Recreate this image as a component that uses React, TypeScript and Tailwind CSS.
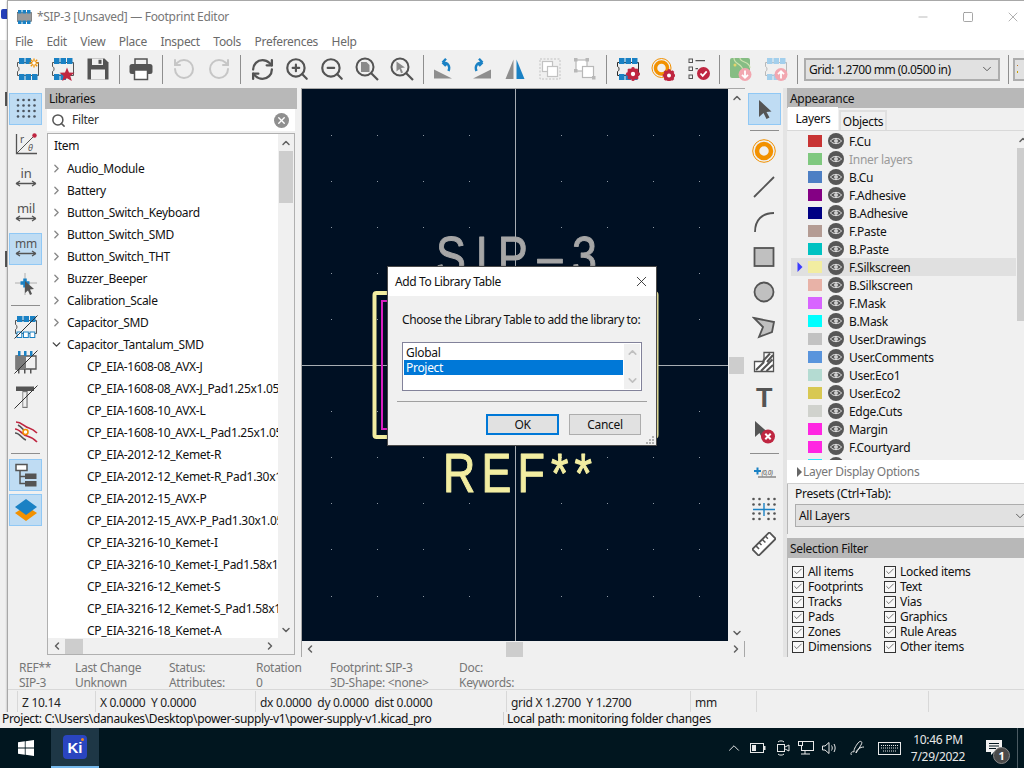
import React from "react";
import { ChevronUp, ChevronDown, ChevronLeft, ChevronRight, RotateCcw, RotateCw, RefreshCw, ZoomIn, ZoomOut, Check, X, Search, Minus, Square } from "lucide-react";

const D = "#545454", B = "#1a81c4", R = "#bf2641", O = "#f29100";

const I = ({ children, s = 24 }: { children?: React.ReactNode; s?: number }) => (
  <svg width={s} height={s} viewBox="0 0 24 24" fill="none">{children}</svg>
);

const FpBody = ({ c = D, p = B, top = 3, bot = 3 }: { c?: string; p?: string; top?: number; bot?: number }) => (
  <>
    <path d="M1.5 5.5H22.5V18.500H1.5V14.500C3.500 14 3.500 10 1.500 9.500Z" stroke={c} strokeWidth="1" />
    {[0, 1, 2].slice(0, top).map((i) => <rect key={i} x={3 + i * 6.5} y="1" width="5.500" height="6" fill={p} />)}
    {[0, 1, 2].slice(0, bot).map((i) => <rect key={i} x={3 + i * 6.5} y="17" width="5.500" height="6" fill={p} />)}
  </>
);

const Gear = ({ x, y, r = 5, c = R }: { x: number; y: number; r?: number; c?: string }) => (
  <g>
    <circle cx={x} cy={y} r={r * 0.72} stroke={c} strokeWidth={r * 0.56} />
    {[0, 45, 90, 135].map((a) => (
      <rect key={a} x={x - r * 0.22} y={y - r * 1.15} width={r * 0.44} height={r * 2.3} fill={c} transform={`rotate(${a} ${x} ${y})`} />
    ))}
    <circle cx={x} cy={y} r={r * 0.36} fill="#fff" />
  </g>
);

const Sep = () => (
  <div className="w-[8px] h-full flex items-center justify-center shrink-0">
    <div className="w-[1px] h-[29px] bg-[#8e8e8e]" />
  </div>
);
const HSep = () => (
  <div className="h-[8px] w-full flex items-center justify-center shrink-0">
    <div className="h-[1px] w-[29px] bg-[#8e8e8e]" />
  </div>
);
const TB = ({ children }: { children?: React.ReactNode }) => (
  <div className="w-[35px] h-[38px] flex items-center justify-center shrink-0">{children}</div>
);
const VB = ({ children, on }: { children?: React.ReactNode; on?: boolean }) => (
  <div className="w-full h-[35px] flex items-center justify-center shrink-0">
    <div className={on ? "w-[33px] h-[32px] flex items-center justify-center bg-[#bfdcf3] border border-[#90c8f5]" : "w-[33px] h-[32px] flex items-center justify-center"}>
      {children}
    </div>
  </div>
);

const Dots = ({ c = "#4c5560" }: { c?: string }) => (
  <I>
    {[4, 9.500, 15, 20.500].flatMap((x) => [3, 8.500, 14, 19.500].map((y) => <circle key={x + "-" + y} cx={x} cy={y} r="1.300" fill={c} />))}
  </I>
);
const Unit = ({ t, y = 11, fs = 13 }: { t: string; y?: number; fs?: number }) => (
  <I>
    <text x="12" y={y} textAnchor="middle" fontSize={fs} fill={D} fontFamily="Noto Sans, sans-serif">{t}</text>
    <path d="M2 16.500H22M2 16.500L6 14M2 16.500L6 19M22 16.500L18 14M22 16.500L18 19" stroke={D} strokeWidth="1.300" />
  </I>
);

const Toolbar = () => (
  <div className="h-[38px] bg-[#f0f0f0] flex items-center pl-[2.5px] shrink-0">
    <TB><I><FpBody top={2} /><g stroke={O} strokeWidth="1.300"><path d="M18 1.500V10.500M13.500 6H22.500M14.800 2.800L21.200 9.200M21.200 2.800L14.800 9.200" /></g><circle cx="18" cy="6" r="1.800" fill="#fff" /></I></TB>
    <TB><I><FpBody top={3} bot={2} /><path d="M16 10.500L18 15.500L23.500 15.800L19.300 19L20.800 24L16 21.200L11.200 24L12.700 19L8.500 15.800L14 15.500Z" fill={R} /></I></TB>
    <TB><I><path d="M1.500 1.500H18.500L22.500 5.500V22.500H1.500Z" fill={D} /><rect x="6" y="1.500" width="11" height="6.500" fill="#f0f0f0" /><rect x="12.500" y="2.800" width="3" height="4" fill={D} /><rect x="5" y="12.500" width="14" height="10" fill="#f0f0f0" /></I></TB>
    <Sep />
    <TB><I><path d="M6 7V2H18V7" stroke={D} strokeWidth="1.500" /><rect x="0.500" y="7" width="23" height="10" rx="2.500" fill={D} /><path d="M5.500 13H18.500V22.500H5.500Z" fill="#fff" stroke={D} strokeWidth="1.500" /></I></TB>
    <Sep />
    <TB><RotateCcw size={24} color="#c6c6c6" strokeWidth={2} /></TB>
    <TB><RotateCw size={24} color="#c6c6c6" strokeWidth={2} /></TB>
    <Sep />
    <TB><RefreshCw size={25} color={D} strokeWidth={2.200} /></TB>
    <TB><ZoomIn size={26} color={D} strokeWidth={2} /></TB>
    <TB><ZoomOut size={26} color={D} strokeWidth={2} /></TB>
    <TB><I><circle cx="10" cy="10" r="8.500" stroke={D} strokeWidth="2" /><path d="M16 16L23 23" stroke={D} strokeWidth="2.200" /><path d="M6 5H11.500L14.500 8V15H6Z" fill="#8a8a8a" /></I></TB>
    <TB><I><circle cx="10" cy="10" r="8.500" stroke={D} strokeWidth="2" /><path d="M16 16L23 23" stroke={D} strokeWidth="2.200" /><path d="M6.500 4.500L15 10.500L11 11L13 15.500L11 16.300L9.500 12L6.500 14.500Z" fill="#8a8a8a" /></I></TB>
    <Sep />
    <TB><I><path d="M1 12.500L19 21.500H1Z" fill="#8e8e8e" /><path d="M15.500 14C17.500 9 15 5.500 9.500 5.500M9.500 5.500L13 1.800M9.500 5.500L13 9" stroke={B} strokeWidth="2.400" /></I></TB>
    <TB><I><path d="M23 12.500L5 21.500H23Z" fill="#8e8e8e" /><path d="M8.500 14C6.500 9 9 5.500 14.500 5.500M14.500 5.500L11 1.800M14.500 5.500L11 9" stroke={B} strokeWidth="2.400" /></I></TB>
    <TB><I><path d="M10.500 2.500V22H2.500Z" fill="#8e8e8e" /><path d="M13.500 2.500V22H21.500Z" fill={B} /></I></TB>
    <TB><I><rect x="2" y="2" width="20" height="20" stroke="#c2c2c2" strokeWidth="1" strokeDasharray="2 1.500" /><rect x="4.500" y="4.500" width="10" height="10" fill="#fff" stroke="#c2c2c2" strokeWidth="1.200" /><rect x="9.500" y="9.500" width="10" height="10" fill="#fff" stroke="#c2c2c2" strokeWidth="1.200" /></I></TB>
    <TB><I><rect x="3" y="3" width="11" height="11" fill="#fff" stroke="#b8b8b8" strokeWidth="1.200" /><rect x="9.500" y="9.500" width="11" height="11" fill="#fff" stroke="#b8b8b8" strokeWidth="1.200" /><rect x="1" y="1" width="3.500" height="3.500" fill="#b8b8b8" /><rect x="12.500" y="1" width="3.500" height="3.500" fill="#b8b8b8" /><rect x="1" y="12" width="3.500" height="3.500" fill="#b8b8b8" /><rect x="19" y="19" width="3.500" height="3.500" fill="#b8b8b8" /></I></TB>
    <Sep />
    <TB><I><FpBody c="#2a2a2a" /><Gear x={17} y={17} r={6} /></I></TB>
    <TB><I><circle cx="10.500" cy="11" r="9.500" stroke={O} strokeWidth="1" /><circle cx="10.500" cy="11" r="6" stroke={O} strokeWidth="3.500" /><Gear x={18} y={18.500} r={5.500} /></I></TB>
    <TB><I><rect x="3" y="2" width="3.500" height="3.500" stroke={D} strokeWidth="1" /><rect x="3" y="10" width="3.500" height="3.500" stroke={D} strokeWidth="1" /><rect x="3" y="18" width="3.500" height="3.500" stroke={D} strokeWidth="1" /><path d="M9.500 3.700H19M9.500 11.700H12" stroke={D} strokeWidth="1.200" /><circle cx="17.500" cy="16.500" r="6.500" fill={R} /><path d="M14.500 16.500L16.700 18.800L20.700 14.300" stroke="#fff" strokeWidth="1.800" /></I></TB>
    <Sep />
    <TB><I><rect x="1" y="1" width="20" height="20" rx="2" fill="#86bd84" /><path d="M5 1C5 8 14 6 14 14V21M11 1C11 6 21 4 21 11" stroke="#cfe3b0" strokeWidth="1.200" /><circle cx="6" cy="8" r="1.500" fill="#e6d56a" /><circle cx="16" cy="17.500" r="6.500" fill="#f2a7b0" /><path d="M16 13.500V20.500M13 17.800L16 20.800L19 17.800" stroke="#fff" strokeWidth="1.800" /></I></TB>
    <TB><I><FpBody c="#b9b9b9" p="#a3cfec" /><circle cx="17" cy="17.500" r="6.500" fill="#f2a7b0" /><path d="M17 21.500V14.500M14 17.200L17 14.200L20 17.200" stroke="#fff" strokeWidth="1.800" /></I></TB>
    <Sep />
    <div className="w-[196px] h-[23px] ml-[2.5px] shrink-0 bg-[#e1e1e1] border-2 border-[#adadad] flex items-center justify-between pl-[3px] pr-[4px] text-[#111] tracking-[-0.5px]">
      <span>Grid: 1.2700 mm (0.0500 in)</span>
      <ChevronDown size={14} color="#555" strokeWidth={1.600} />
    </div>
    <div className="ml-[4px]"><Sep /></div>
    <div className="w-[40px] h-[23px] ml-[1px] shrink-0 bg-[#e1e1e1] border-2 border-[#adadad] flex items-center pl-[2px] gap-[6px]">
      <div className="flex flex-col gap-[5px]"><div className="w-[1px] h-[1px] bg-[#c07a20]" /><div className="w-[1px] h-[2px] bg-[#c8a000]" /></div>
      <ChevronDown size={14} color="#555" strokeWidth={1.600} />
    </div>
  </div>
);

const LeftTools = () => (
  <div className="w-[37px] shrink-0 pt-[3.500px] flex flex-col bg-[#f0f0f0] pr-[2px]">
    <VB on><Dots /></VB>
    <VB><I><path d="M2.500 2V21.500H23" stroke={D} strokeWidth="1.300" /><path d="M2.500 21.500L20 4" stroke={D} strokeWidth="1" /><circle cx="20.500" cy="3.500" r="2.200" fill={R} /><text x="6" y="11" fontSize="10" fill={D} fontFamily="Noto Sans, sans-serif">r</text><text x="14" y="19" fontSize="9" fontStyle="italic" fill={D} fontFamily="Noto Sans, sans-serif">θ</text></I></VB>
    <VB><Unit t="in" /></VB>
    <VB><Unit t="mil" /></VB>
    <VB on><Unit t="mm" fs={12} /></VB>
    <VB><I><path d="M11 1V23M1 11H23" stroke="#a0a0a0" strokeWidth="0.800" /><path d="M6.500 11H15.500M11 6.500V15.500" stroke={B} strokeWidth="3.500" /><path d="M11 9L11 21L14 18.500L16 23L18 22L16 17.500L20 17Z" fill={D} /></I></VB>
    <HSep />
    <VB><I><path d="M1.500 5.500H22.500V18.500H1.500V14.500C3.500 14 3.500 10 1.500 9.500Z" stroke={D} strokeWidth="1" />{[3, 9.500, 16].map((x) => <rect key={x} x={x} y="1" width="5.500" height="6" fill={B} />)}{[3, 9.500, 16].map((x) => <rect key={x} x={x} y="17" width="4.800" height="5.500" fill="#fff" stroke={B} strokeWidth="1" />)}<path d="M0.500 23.500L23.500 0.500" stroke="#333" strokeWidth="1" /></I></VB>
    <VB><I><path d="M2 6H22V19H2Z" fill="#f0f0f0" stroke={D} strokeWidth="1.300" /><path d="M2 6H12V19H2Z" fill="#7a7a7a" />{[4, 10, 16].map((x) => <rect key={x} x={x} y="1" width="2.500" height="5" fill={B} />)}{[4, 10, 16].map((x) => <rect key={x} x={x} y="19" width="1.500" height="4.500" fill={D} />)}<path d="M0.500 23.500L23.500 0.500" stroke="#333" strokeWidth="1" /></I></VB>
    <VB><I><path d="M2 1.500H20V6H13.500V23H8.500V6H2Z" fill={D} /><rect x="9" y="7" width="3.500" height="15" fill="#f0f0f0" stroke="#b0b0b0" strokeWidth="0.800" /><path d="M0.500 23.500L23.500 0.500" stroke="#333" strokeWidth="1" /></I></VB>
    <VB><I><path d="M2 2C8 2 10 7 15 8C18 8.800 20 10 23 13" stroke={R} strokeWidth="1.700" /><path d="M1 9C6 9 8 15 13 16C17 17 20 19 23 22" stroke={R} strokeWidth="1.700" /><path d="M1 13C6 13 8 19 12 20" stroke={D} strokeWidth="1.700" /><path d="M4 5C8 7 9 10 11 11" stroke={D} strokeWidth="1.700" /><circle cx="11.500" cy="12" r="2.500" fill="#fff" stroke={O} strokeWidth="1.500" /></I></VB>
    <HSep />
    <VB on><I><rect x="2" y="1.500" width="11" height="6" fill="#fff" stroke={D} strokeWidth="1.500" /><path d="M6 8V20.500H12M6 13.500H12" stroke={D} strokeWidth="1.500" /><rect x="11" y="10.500" width="11.500" height="5.500" fill={D} /><rect x="11" y="18" width="11.500" height="5.500" fill={D} /></I></VB>
    <VB on><I><path d="M12 8L23 15L12 23L1 15Z" fill={O} /><path d="M12 1L23 9L12 17L1 9Z" fill={B} /></I></VB>
  </div>
);

const VScroll = ({ className, thumbTop, thumbH }: { className?: string; thumbTop: string; thumbH: string }) => (
  <div className={className + " flex flex-col items-center"}>
    <div className="h-[17px] flex items-center justify-center shrink-0"><ChevronUp size={12} color="#606060" strokeWidth={3} /></div>
    <div className="flex-1 w-full px-[1px]">
      <div className={thumbTop + " " + thumbH + " w-full bg-[#cdcdcd]"} />
    </div>
    <div className="h-[17px] flex items-center justify-center shrink-0"><ChevronDown size={12} color="#606060" strokeWidth={3} /></div>
  </div>
);

const GROUPS = ["Audio_Module", "Battery", "Button_Switch_Keyboard", "Button_Switch_SMD", "Button_Switch_THT", "Buzzer_Beeper", "Calibration_Scale", "Capacitor_SMD"];
const LEAVES = ["CP_EIA-1608-08_AVX-J", "CP_EIA-1608-08_AVX-J_Pad1.25x1.05mm", "CP_EIA-1608-10_AVX-L", "CP_EIA-1608-10_AVX-L_Pad1.25x1.05mm", "CP_EIA-2012-12_Kemet-R", "CP_EIA-2012-12_Kemet-R_Pad1.30x1.05mm", "CP_EIA-2012-15_AVX-P", "CP_EIA-2012-15_AVX-P_Pad1.30x1.05mm", "CP_EIA-3216-10_Kemet-I", "CP_EIA-3216-10_Kemet-I_Pad1.58x1.35mm", "CP_EIA-3216-12_Kemet-S", "CP_EIA-3216-12_Kemet-S_Pad1.58x1.35mm", "CP_EIA-3216-18_Kemet-A"];

const Libraries = () => (
  <div className="w-[252px] shrink-0 flex flex-col bg-[#f0f0f0] h-full">
    <div className="h-[21px] bg-[#b8b8b8] pl-[4px] flex items-center shrink-0 text-[#111]">Libraries</div>
    <div className="h-[22px] mx-[2px] bg-white flex items-center shrink-0 pl-[4px] pr-[6px] text-[#333]">
      <Search size={15} color="#555" strokeWidth={2.400} />
      <span className="ml-[6px] flex-1 pb-[2px]">Filter</span>
      <div className="w-[15px] h-[15px] rounded-full bg-[#8f8f8f] flex items-center justify-center"><X size={11} color="#fff" strokeWidth={3} /></div>
    </div>
    <div className="flex-1 min-h-0 mt-[2px] mx-[2px] mr-[2px] mb-[2px] border border-[#b0b0b0] bg-[#f0f0f0] flex flex-col">
      <div className="flex-1 min-h-0 flex overflow-hidden">
        <div className="flex-1 min-w-0 bg-white overflow-hidden text-[#111] whitespace-nowrap">
          <div className="h-[23px] pl-[6px] flex items-center">Item</div>
          {GROUPS.map((g) => (
            <div key={g} className="h-[22px] flex items-center pl-[2px]">
              <ChevronRight size={13} color="#8a8a8a" strokeWidth={2.600} />
              <span className="ml-[4px]">{g}</span>
            </div>
          ))}
          <div className="h-[22px] flex items-center pl-[2px]">
            <ChevronDown size={13} color="#444" strokeWidth={2.600} />
            <span className="ml-[4px]">Capacitor_Tantalum_SMD</span>
          </div>
          {LEAVES.map((l) => <div key={l} className="h-[22px] flex items-center pl-[39px]">{l}</div>)}
        </div>
        <VScroll className="w-[16px] shrink-0 bg-[#f0f0f0]" thumbTop="mt-[0px]" thumbH="h-[52px]" />
      </div>
      <div className="h-[16px] shrink-0 flex items-center bg-[#f0f0f0]">
        <div className="w-[17px] flex justify-center"><ChevronLeft size={12} color="#606060" strokeWidth={3} /></div>
        <div className="w-[18px] h-[15px] bg-[#cdcdcd]" />
        <div className="flex-1" />
        <div className="w-[16px] mr-[16px] flex justify-center"><ChevronRight size={12} color="#606060" strokeWidth={3} /></div>
      </div>
    </div>
  </div>
);

const CanvasArt = () => {
  const xs: number[] = [];
  for (let x = 515 - 46.1 * 4; x < 728; x += 46.1) xs.push(x - 302);
  const ys: number[] = [];
  for (let y = 365 - 46.1 * 5; y < 641; y += 46.1) ys.push(y - 89);
  return (
    <svg width="426" height="553" viewBox="0 0 426 553" className="block">
      <rect width="426" height="553" fill="#001023" />
      {xs.flatMap((x) => ys.map((y) => <rect key={x + ":" + y} x={Math.round(x)} y={Math.round(y)} width="1" height="1" fill="#8f98a3" />))}
      <path d="M213.500 0V553M0 276.500H426" stroke="#a7adb3" strokeWidth="1" />
      <rect x="72.500" y="204" width="282" height="144" rx="2" fill="none" stroke="#f2eda1" strokeWidth="4" />
      <rect x="80" y="212" width="260" height="128" fill="none" stroke="#d81fc0" strokeWidth="2" />
      <g transform="translate(134 186) scale(0.8 1)">
        <text x="0" y="0" fontSize="56" fontFamily="Liberation Sans, sans-serif" fill="#a6a6a6" stroke="#a6a6a6" strokeWidth="1" strokeLinejoin="round" textLength="201" lengthAdjust="spacing">SIP–3</text>
      </g>
      <g transform="translate(141 402.500) scale(0.8 1)">
        <text x="0" y="0" fontSize="56" fontFamily="Liberation Sans, sans-serif" fill="#f2eda1" stroke="#f2eda1" strokeWidth="1" strokeLinejoin="round" textLength="186" lengthAdjust="spacing">REF**</text>
      </g>
    </svg>
  );
};

const CanvasCol = () => (
  <div className="w-[444px] shrink-0 flex flex-col h-full border-l border-t border-[#a8a8a8] border-r">
    <div className="h-[552px] flex shrink-0">
      <div className="w-[426px] shrink-0 overflow-hidden"><CanvasArt /></div>
      <VScroll className="w-[17px] shrink-0 bg-[#f0f0f0]" thumbTop="mt-[251px]" thumbH="h-[17px]" />
    </div>
    <div className="h-[16px] shrink-0 flex items-center bg-[#f0f0f0]">
      <div className="w-[16px] flex justify-center"><ChevronLeft size={12} color="#606060" strokeWidth={3} /></div>
      <div className="w-[188px]" />
      <div className="w-[17px] h-[15px] bg-[#cdcdcd]" />
      <div className="flex-1" />
      <div className="w-[16px] flex justify-center"><ChevronRight size={12} color="#606060" strokeWidth={3} /></div>
    </div>
  </div>
);

const RightTools = () => (
  <div className="w-[38px] shrink-0 pt-[3.500px] flex flex-col bg-[#f0f0f0] pl-[2px] pr-[2px]">
    <VB on><I><path d="M7 3V20L11.500 16L14.500 22L17.500 20.500L14.500 15L19.500 14.500Z" fill={D} /></I></VB>
    <HSep />
    <div className="-mt-[1px]"><VB><I><circle cx="12" cy="12" r="11.300" stroke={O} strokeWidth="1" /><circle cx="12" cy="12" r="7" stroke={O} strokeWidth="4.500" /></I></VB></div>
    <div className="mt-[1px]"><VB><I><path d="M2 22L22 2" stroke={D} strokeWidth="1.800" /></I></VB></div>
    <VB><I><path d="M3 22C3 10 10 3 22 3" stroke={D} strokeWidth="1.800" /></I></VB>
    <VB><I><rect x="2.500" y="3" width="19" height="18" fill="#c0c0c0" stroke={D} strokeWidth="1.800" /></I></VB>
    <VB><I><circle cx="12" cy="12" r="9.500" fill="#c0c0c0" stroke={D} strokeWidth="1.800" /></I></VB>
    <VB><I><path d="M2 3L22 7L20 17L7 22L11 12Z" fill="#c0c0c0" stroke={D} strokeWidth="1.800" /></I></VB>
    <VB><I><path d="M12 2.500H21.500V21.500H2.500V11.500H12Z" fill="#fff" stroke={D} strokeWidth="1.300" /><path d="M4 20L12 12M9 21L20.500 9.500M14.500 21L21 15M11 11L18 3.500M15 12L21 5" stroke={D} strokeWidth="2" /></I></VB>
    <VB><I><text x="12" y="22" textAnchor="middle" fontSize="27" fontWeight="700" fill={D} fontFamily="Liberation Sans, sans-serif">T</text></I></VB>
    <VB><I><path d="M3 1V17L7.500 13L10.500 19L13 17.500L11 12.500L15.500 12Z" fill={D} /><circle cx="16" cy="16.500" r="7" fill={R} /><path d="M13.300 13.800L18.700 19.200M18.700 13.800L13.300 19.200" stroke="#fff" strokeWidth="2" /></I></VB>
    <HSep />
    <div className="-mt-[2px]"><VB><I><path d="M2 10H9M5.500 6.500V13.500" stroke={B} strokeWidth="2" /><text x="9.500" y="13.500" fontSize="6.500" fontStyle="italic" fill={D} fontFamily="Noto Sans, sans-serif" letterSpacing="-0.3">(0,0)</text><path d="M6 16H24" stroke={D} strokeWidth="1" /></I></VB></div>
    <div className="mt-[1px]"><VB><I>
      {[1.500, 7.500, 16.500, 22.500].flatMap((x) => [2, 7.500, 16.500, 22].map((y) => <circle key={x + "/" + y} cx={x} cy={y} r="1.300" fill={D} />))}
      <path d="M1 12.500H23M12 6V19" stroke={B} strokeWidth="1.400" />
    </I></VB></div>
    <VB><I><g transform="rotate(-45 12 12)"><rect x="0" y="7.500" width="24" height="9" fill="#fff" stroke={D} strokeWidth="1.800" /><path d="M5 8V12M9.500 8V11M14 8V12M18.500 8V11" stroke={D} strokeWidth="1.500" /></g></I></VB>
  </div>
);

const LAYERS: [string, string, string][] = [
  ["F.Cu", "#c83434", "F.Cu"], ["Inner layers", "#7fc87f", "Inner layers"], ["B.Cu", "#4d7fc4", "B.Cu"], ["F.Adhesive", "#840084", "F.Adhesive"], ["B.Adhesive", "#000084", "B.Adhesive"], ["F.Paste", "#b49c94", "F.Paste"], ["B.Paste", "#00c2c2", "B.Paste"], ["F.Silkscreen", "#f2eda1", "F.Silkscreen"], ["B.Silkscreen", "#e8b2a7", "B.Silkscreen"], ["F.Mask", "#d864ff", "F.Mask"], ["B.Mask", "#00ffff", "B.Mask"], ["User.Drawings", "#c2c2c2", "User.Drawings"], ["User.Comments", "#5994dc", "User.Comments"], ["User.Eco1", "#b4dbd2", "User.Eco1"], ["User.Eco2", "#d8c852", "User.Eco2"], ["Edge.Cuts", "#d0d2cd", "Edge.Cuts"], ["Margin", "#ff26e2", "Margin"], ["F.Courtyard", "#ff26e2", "F.Courtyard"], ["row-last", "#26e9ff", ""],
];

const Cb = ({ t }: { t: string }) => (
  <div className="h-[15px] flex items-center">
    <div className="w-[12px] h-[12px] border border-[#333] bg-[#f8f8f8] flex items-center justify-center shrink-0"><Check size={11} color="#333" strokeWidth={1.600} /></div>
    <span className="ml-[4px] text-[#111]">{t}</span>
  </div>
);

const Appearance = () => (
  <div className="w-[248px] shrink-0 flex flex-col h-full bg-[#f0f0f0]">
    <div className="h-[20px] bg-[#b8b8b8] pl-[3px] flex items-center shrink-0 text-[#111]">Appearance</div>
    <div className="h-[23px] flex items-end shrink-0 pl-[1px] border-b border-[#d9d9d9]">
      <div className="w-[50px] h-[23px] bg-white flex items-center justify-center text-[#111]">Layers</div>
      <div className="w-[48px] h-[20px] ml-[1px] border-2 border-b-0 border-[#e0e0e0] bg-[#f0f0f0] flex items-center justify-center text-[#111]">Objects</div>
    </div>
    <div className="h-[329px] shrink-0 flex pl-[4px] overflow-hidden">
      <div className="w-[225px] shrink-0 pt-[1px] overflow-hidden">
        {LAYERS.map(([k, c, n]) => (
          <div key={k} className={k === "F.Silkscreen" ? "h-[18px] flex items-center bg-[#e0e0e0]" : "h-[18px] flex items-center"}>
            <div className="w-[17px] pl-[6px] shrink-0">
              {k === "F.Silkscreen" && <svg width="6" height="10" viewBox="0 0 6 10"><path d="M0.500 0L5.500 5L0.500 10Z" fill="#3c3cff" /></svg>}
            </div>
            <div className="w-[14px] h-[12px] shrink-0" style={{ background: c }} />
            <div className="w-[6px] shrink-0" />
            <Eye />
            {n && <span className={k === "Inner layers" ? "ml-[5px] text-[#9a9a9a]" : "ml-[5px] text-[#111]"}>{n}</span>}
          </div>
        ))}
      </div>
      <div className="w-[20px] shrink-0 ml-[1px] flex flex-col">
        <div className="h-[17px] flex items-center pl-[0px]"><ChevronUp size={12} color="#606060" strokeWidth={3} /></div>
        <div className="h-[173px] bg-[#cdcdcd]" />
      </div>
    </div>
    <div className="h-[24px] shrink-0 bg-white flex items-center pl-[10px] text-[#777] border-b border-[#d0d0d0]">
      <svg width="5" height="10" viewBox="0 0 5 10"><path d="M0 0L5 5L0 10Z" fill="#666" /></svg>
      <span className="ml-[1px]">Layer Display Options</span>
    </div>
    <div className="h-[50px] shrink-0 flex flex-col pl-[7px] border-l border-[#b8b8b8] mb-[4px] pt-[2px]">
      <div className="h-[15px] flex items-center text-[#111]">Presets (Ctrl+Tab):</div>
      <div className="mt-[3px] h-[23px] w-[241px] bg-[#e1e1e1] border border-[#adadad] flex items-center justify-between pl-[3px] pr-[8px] text-[#111]">
        <span>All Layers</span>
        <ChevronDown size={14} color="#555" strokeWidth={1.600} />
      </div>
    </div>
    <div className="h-[20px] bg-[#b8b8b8] pl-[3px] flex items-center shrink-0 text-[#111]">Selection Filter</div>
    <div className="flex-1 min-h-0 flex pl-[4px] pt-[6px] border-l border-[#b8b8b8]">
      <div className="w-[92px] shrink-0">{["All items", "Footprints", "Tracks", "Pads", "Zones", "Dimensions"].map((t) => <Cb key={t} t={t} />)}</div>
      <div>{["Locked items", "Text", "Vias", "Graphics", "Rule Areas", "Other items"].map((t) => <Cb key={t} t={t} />)}</div>
    </div>
  </div>
);

const Eye = () => (
  <svg width="16" height="16" viewBox="0 0 16 16" className="shrink-0">
    <circle cx="8" cy="8" r="8" fill="#565656" />
    <path d="M2.500 8C5 4.500 11 4.500 13.500 8C11 11.500 5 11.500 2.500 8Z" fill="none" stroke="#e6e6e6" strokeWidth="1" />
    <circle cx="8" cy="8" r="2" fill="#d0d0d0" />
  </svg>
);

const MSG: [number, string, string][] = [[56, "REF**", "SIP-3"], [94, "Last Change", "Unknown"], [87, "Status:", "Attributes:"], [74, "Rotation", "0"], [129, "Footprint: SIP-3", "3D-Shape: <none>"], [120, "Doc:", "Keywords:"]];
const STATUS: [number, string][] = [[78, "Z 10.14"], [160, "X 0.0000  Y 0.0000"], [251, "dx 0.0000  dy 0.0000  dist 0.0000"], [184, "grid X 1.2700  Y 1.2700"], [66, "mm"], [172, ""], [100, ""]];

const Dialog = () => (
  <div className="absolute left-[387px] top-[266px] w-[270px] h-[180px] bg-[#f0f0f0] border border-[#4a4a4a] flex flex-col shadow-[0_0_2px_rgba(0,0,0,0.3)]">
    <div className="h-[29px] bg-white flex items-center justify-between pl-[7px] pr-[6px] shrink-0 text-[#111] tracking-[-0.4px]">
      <span>Add To Library Table</span>
      <X size={17} color="#222" strokeWidth={1.200} />
    </div>
    <div className="pl-[14px] pt-[16px] h-[46px] shrink-0 text-[#111] whitespace-nowrap tracking-[-0.4px]">Choose the Library Table to add the library to:</div>
    <div className="ml-[14px] w-[240px] h-[49px] shrink-0 border border-[#82829a] bg-white flex p-[1px]">
      <div className="flex-1 text-[#111] pl-[1px] pt-[1px]">
        <div className="h-[15px] flex items-center pl-[2px] -ml-[1px]">Global</div>
        <div className="h-[15px] flex items-center pl-[2px] -ml-[1px] bg-[#0078d7] text-white">Project</div>
      </div>
      <div className="w-[16px] ml-[1px] shrink-0 bg-[#f0f0f0] flex flex-col items-center justify-between py-[2px]">
        <ChevronUp size={13} color="#c0c0c0" strokeWidth={3} />
        <ChevronDown size={13} color="#c0c0c0" strokeWidth={3} />
      </div>
    </div>
    <div className="mt-[10px] mx-[9px] h-[1px] bg-[#a0a0a0] shrink-0" />
    <div className="flex pl-[98px] pt-[12px] gap-[10px] text-[#111] shrink-0">
      <div className="w-[73px] h-[21px] bg-[#e1e1e1] border-2 border-[#0078d7] flex items-center justify-center">OK</div>
      <div className="w-[72px] h-[21px] bg-[#e1e1e1] border border-[#adadad] flex items-center justify-center">Cancel</div>
    </div>
    <div className="flex justify-end pr-[2px] pt-[1px]">
      <svg width="8" height="8" viewBox="0 0 8 8">
        {[[6, 0], [3, 3], [6, 3], [0, 6], [3, 6], [6, 6]].map(([x, y]) => <rect key={x + "," + y} x={x} y={y} width="2" height="2" fill="#b0b0b0" />)}
      </svg>
    </div>
  </div>
);

const Tray = () => (
  <div className="flex items-center h-full text-white">
    <div className="w-[24px] flex justify-center"><ChevronUp size={18} color="#e8e8e8" strokeWidth={1.300} /></div>
    <svg width="16" height="10" viewBox="0 0 16 10" className="ml-[4px]"><rect x="0.500" y="0.500" width="13" height="9" stroke="#e8e8e8" fill="none" /><rect x="2" y="2" width="4" height="6" fill="#e8e8e8" /><rect x="14" y="3" width="1.500" height="4" fill="#e8e8e8" /></svg>
    <svg width="14" height="16" viewBox="0 0 14 16" className="ml-[10px]"><path d="M2 2C3 0.500 7 0.500 8 2M2 14C3 15.500 7 15.500 8 14" stroke="#e8e8e8" fill="none" /><rect x="1.500" y="4.500" width="7" height="7" stroke="#e8e8e8" fill="none" /><path d="M9 7L13 5V11L9 9" stroke="#e8e8e8" fill="none" /></svg>
    <svg width="16" height="14" viewBox="0 0 16 14" className="ml-[8px]"><rect x="3.500" y="0.500" width="12" height="9" stroke="#e8e8e8" fill="none" /><rect x="0.500" y="0.500" width="4" height="4" stroke="#e8e8e8" fill="#01161f" /><path d="M7 9.500V13M3 13H12" stroke="#e8e8e8" /></svg>
    <svg width="16" height="14" viewBox="0 0 16 14" className="ml-[8px]"><path d="M0.500 5H3L7 1.500V12.500L3 9H0.500Z M9.500 4.500C10.500 6 10.500 8 9.500 9.500M12 3C13.500 5.500 13.500 8.500 12 11" stroke="#e8e8e8" fill="none" /></svg>
    <svg width="16" height="17" viewBox="0 0 16 17" className="ml-[12px]"><path d="M1.500 15C0 13 2 11 4 12C3.500 9 7 4 9 2C11 0.500 12.500 2 11.500 4C10.500 6 8 10 6 13C6 10 10 7 14 7" stroke="#e8e8e8" fill="none" /></svg>
    <svg width="23" height="13" viewBox="0 0 23 13" className="ml-[11.5px]"><rect x="0.500" y="0.500" width="22" height="12" stroke="#e8e8e8" fill="none" /><path d="M3 3.500H20M3 6H20M5 9H18" stroke="#e8e8e8" strokeDasharray="1 1" /></svg>
    <div className="w-[72px] ml-[1.5px] flex flex-col items-center leading-[17px] text-[#e8e8e8] pb-[1px]">
      <span>10:46 PM</span>
      <span>7/29/2022</span>
    </div>
    <div className="w-[42px] ml-[2px] h-full flex items-center pl-[5px] relative border-r border-[#4a5a62]">
      <svg width="17" height="16" viewBox="0 0 17 16" className="ml-[5px]"><path d="M0 0H16V12H8L5 15V12H0Z" fill="#f2f2f2" /><path d="M3 3.500H13M3 6H13M3 8.500H10" stroke="#01161f" /></svg>
      <div className="absolute left-[17px] top-[19px] w-[17px] h-[17px] rounded-full bg-[#4a4a4a] border border-[#888] text-white font-bold text-[11px] flex items-center justify-center">1</div>
    </div>
    <div className="w-[6px]" />
  </div>
);

export default function App() {
  return (
    <div className="relative w-[1024px] h-[768px] overflow-hidden flex flex-col text-[12px] leading-[15px] font-['Noto_Sans',sans-serif] tracking-[-0.3px] bg-[#f0f0f0]">
      <div className="h-[712px] shrink-0 flex">
        <div className="w-[7px] shrink-0 flex flex-col bg-[#f0f0f0]">
          <div className="h-[40px] bg-white pt-[9px] shrink-0"><div className="w-[7px] h-[10px] bg-[#2540b8] rounded-l-[2px] ml-[1px]" /></div>
          <div className="h-[52px]" />
          <div className="h-[14px] w-[2px] ml-[5px] bg-[#555]" />
          <div className="h-[145px]" />
          <div className="h-[16px] w-[2px] ml-[5px] bg-[#555]" />
        </div>
        <div className="w-[1028px] shrink-0 flex flex-col border-l border-t border-[#a8a8a8] bg-[#f0f0f0] shadow-[0_1px_2px_rgba(0,0,0,0.3)]">
          <div className="h-[27px] bg-white flex items-center shrink-0 pl-[9px] pt-[4px] text-[#777]">
            <svg width="15" height="14" viewBox="0 0 15 14"><rect x="0.500" y="2.500" width="14" height="9" fill="#9a9a9a" stroke="#555" strokeWidth="0.600" />{[1, 5.500, 10].flatMap((x) => [0, 10.500].map((y) => <rect key={x + "_" + y} x={x} y={y} width="3.500" height="3.500" fill={B} />))}</svg>
            <span className="ml-[5px]">*SIP-3 [Unsaved] — Footprint Editor</span>
            <div className="flex-1" />
            <div className="w-[45px] flex justify-center"><Minus size={14} color="#8a8a8a" strokeWidth={1} /></div>
            <div className="w-[45px] flex justify-center"><Square size={12} color="#8a8a8a" strokeWidth={1.500} /></div>
            <div className="w-[45px] flex justify-center"><X size={16} color="#8a8a8a" strokeWidth={1} /></div>
          </div>
          <div className="h-[22px] bg-white flex items-center shrink-0 pl-[7px] pt-[4px] text-[#6a6a6a] gap-[13.5px]">
            {["File", "Edit", "View", "Place", "Inspect", "Tools", "Preferences", "Help"].map((m) => <span key={m}>{m}</span>)}
          </div>
          <Toolbar />
          <div className="h-[569px] shrink-0 flex">
            <LeftTools />
            <Libraries />
            <div className="w-[4px] shrink-0" />
            <CanvasCol />
            <RightTools />
            <div className="w-[4px] shrink-0 bg-[#e4e4e4]" />
            <Appearance />
          </div>
          <div className="h-[32px] shrink-0 flex flex-col pl-[11px] pt-[3px] text-[#777]">
            <div className="flex h-[15px]">{MSG.map(([w, a]) => <div key={a} className="shrink-0" style={{ width: w }}>{a}</div>)}</div>
            <div className="flex h-[15px]">{MSG.map(([w, , b]) => <div key={b} className="shrink-0" style={{ width: w }}>{b}</div>)}</div>
          </div>
          <div className="h-[23px] shrink-0 flex pl-[9px] pt-[1px] border-t border-[#d8d8d8] text-[#222] whitespace-pre">
            {STATUS.map(([w, t], i) => <div key={i} className="shrink-0 border-l border-[#d8d8d8] pl-[4px] flex items-center pt-[1px]" style={{ width: w }}>{t}</div>)}
          </div>
        </div>
      </div>
      <div className="h-[16px] shrink-0 flex items-center bg-[#f0f0f0] pl-[2px] pb-[3px] text-[#111]">
        <div className="w-[501px] shrink-0 tracking-[-0.35px]">Project: C:\Users\danaukes\Desktop\power-supply-v1\power-supply-v1.kicad_pro</div>
        <div className="border-l border-[#d0d0d0] pl-[3px] h-full flex items-center">Local path: monitoring folder changes</div>
      </div>
      <div className="h-[40px] shrink-0 bg-[#01161f] flex items-center justify-between">
        <div className="flex items-center h-full">
          <div className="w-[51px] flex justify-center">
            <svg width="16" height="16" viewBox="0 0 16 16"><path d="M0 2.300L6.800 1.300V7.600H0ZM7.600 1.200L16 0V7.600H7.600ZM0 8.400H6.800V14.700L0 13.700ZM7.600 8.400H16V16L7.600 14.800Z" fill="#fff" /></svg>
          </div>
          <div className="w-[48px] h-full bg-[#1e3746] border-b-2 border-[#76b9ed] flex items-center justify-center">
            <div className="relative w-[24px] h-[24px] rounded-[4px] bg-[#2a45c0] flex items-center justify-center text-white font-bold text-[15px] tracking-[0px] font-['Liberation_Sans',sans-serif]">
              Ki
              <div className="absolute right-[3px] top-[3px] w-[3px] h-[3px] rounded-full bg-[#f28a1e]" />
            </div>
          </div>
        </div>
        <Tray />
      </div>
      <Dialog />
    </div>
  );
}
